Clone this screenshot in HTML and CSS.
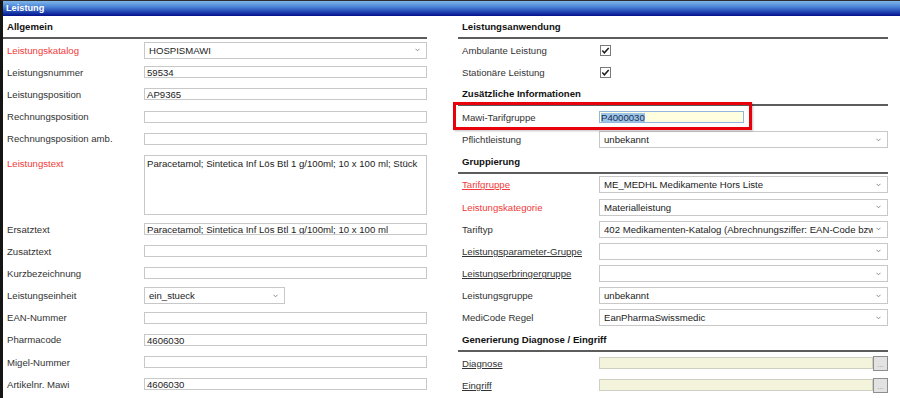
FILE: index.html
```html
<!DOCTYPE html>
<html lang="de">
<head>
<meta charset="utf-8">
<title>Leistung</title>
<link rel="stylesheet" href="styles.css">
</head>
<body>
<div class="window">
  <div class="titlebar">Leistung</div>
  <div class="content">
    <div class="col col-left">
      <div class="head">Allgemein</div>
      <div class="row"><span class="lbl req">Leistungskatalog</span><div class="field"><div class="sel"><span class="val">HOSPISMAWI</span><svg class="chev" width="5" height="4" viewBox="0 0 5 4"><path d="M0.5 0.8 L2.5 2.8 L4.5 0.8" fill="none" stroke="#8a8a8a" stroke-width="1"/></svg></div></div></div>
      <div class="row"><span class="lbl">Leistungsnummer</span><div class="field"><div class="txt">59534</div></div></div>
      <div class="row"><span class="lbl">Leistungsposition</span><div class="field"><div class="txt">AP9365</div></div></div>
      <div class="row"><span class="lbl">Rechnungsposition</span><div class="field"><div class="txt"></div></div></div>
      <div class="row"><span class="lbl">Rechnungsposition amb.</span><div class="field"><div class="txt"></div></div></div>
      <div class="row tall"><span class="lbl req">Leistungstext</span><div class="field"><div class="area">Paracetamol; Sintetica Inf Lös Btl 1 g/100ml; 10 x 100 ml; Stück</div></div></div>
      <div class="row"><span class="lbl">Ersatztext</span><div class="field"><div class="txt">Paracetamol; Sintetica Inf Lös Btl 1 g/100ml; 10 x 100 ml</div></div></div>
      <div class="row"><span class="lbl">Zusatztext</span><div class="field"><div class="txt"></div></div></div>
      <div class="row"><span class="lbl">Kurzbezeichnung</span><div class="field"><div class="txt"></div></div></div>
      <div class="row"><span class="lbl">Leistungseinheit</span><div class="field"><div class="sel short"><span class="val">ein_stueck</span><svg class="chev" width="5" height="4" viewBox="0 0 5 4"><path d="M0.5 0.8 L2.5 2.8 L4.5 0.8" fill="none" stroke="#8a8a8a" stroke-width="1"/></svg></div></div></div>
      <div class="row"><span class="lbl">EAN-Nummer</span><div class="field"><div class="txt"></div></div></div>
      <div class="row"><span class="lbl">Pharmacode</span><div class="field"><div class="txt">4606030</div></div></div>
      <div class="row"><span class="lbl">Migel-Nummer</span><div class="field"><div class="txt"></div></div></div>
      <div class="row"><span class="lbl">Artikelnr. Mawi</span><div class="field"><div class="txt">4606030</div></div></div>
    </div>
    <div class="col col-right">
      <div class="head">Leistungsanwendung</div>
      <div class="row"><span class="lbl">Ambulante Leistung</span><div class="field"><svg class="cb" width="11" height="11" viewBox="0 0 11 11"><rect x="0.5" y="0.5" width="10" height="10" fill="#fff" stroke="#7a7a7a"/><path d="M2.3 5.6 L4.4 7.8 L8.7 2.9" fill="none" stroke="#1e1e1e" stroke-width="1.5"/></svg></div></div>
      <div class="row"><span class="lbl">Stationäre Leistung</span><div class="field"><svg class="cb" width="11" height="11" viewBox="0 0 11 11"><rect x="0.5" y="0.5" width="10" height="10" fill="#fff" stroke="#7a7a7a"/><path d="M2.3 5.6 L4.4 7.8 L8.7 2.9" fill="none" stroke="#1e1e1e" stroke-width="1.5"/></svg></div></div>
      <div class="head">Zusätzliche Informationen</div>
      <div class="row"><span class="lbl">Mawi-Tarifgruppe</span><div class="field"><div class="txt focus"><span class="selected">P4000030</span></div></div></div>
      <div class="row"><span class="lbl">Pflichtleistung</span><div class="field"><div class="sel"><span class="val">unbekannt</span><svg class="chev" width="5" height="4" viewBox="0 0 5 4"><path d="M0.5 0.8 L2.5 2.8 L4.5 0.8" fill="none" stroke="#8a8a8a" stroke-width="1"/></svg></div></div></div>
      <div class="head">Gruppierung</div>
      <div class="row"><span class="lbl req link">Tarifgruppe</span><div class="field"><div class="sel"><span class="val">ME_MEDHL Medikamente Hors Liste</span><svg class="chev" width="5" height="4" viewBox="0 0 5 4"><path d="M0.5 0.8 L2.5 2.8 L4.5 0.8" fill="none" stroke="#8a8a8a" stroke-width="1"/></svg></div></div></div>
      <div class="row"><span class="lbl req">Leistungskategorie</span><div class="field"><div class="sel"><span class="val">Materialleistung</span><svg class="chev" width="5" height="4" viewBox="0 0 5 4"><path d="M0.5 0.8 L2.5 2.8 L4.5 0.8" fill="none" stroke="#8a8a8a" stroke-width="1"/></svg></div></div></div>
      <div class="row"><span class="lbl">Tariftyp</span><div class="field"><div class="sel"><span class="val">402 Medikamenten-Katalog (Abrechnungsziffer: EAN-Code bzw</span><svg class="chev" width="5" height="4" viewBox="0 0 5 4"><path d="M0.5 0.8 L2.5 2.8 L4.5 0.8" fill="none" stroke="#8a8a8a" stroke-width="1"/></svg></div></div></div>
      <div class="row"><span class="lbl link">Leistungsparameter-Gruppe</span><div class="field"><div class="sel"><span class="val"></span><svg class="chev" width="5" height="4" viewBox="0 0 5 4"><path d="M0.5 0.8 L2.5 2.8 L4.5 0.8" fill="none" stroke="#8a8a8a" stroke-width="1"/></svg></div></div></div>
      <div class="row"><span class="lbl link">Leistungserbringergruppe</span><div class="field"><div class="sel"><span class="val"></span><svg class="chev" width="5" height="4" viewBox="0 0 5 4"><path d="M0.5 0.8 L2.5 2.8 L4.5 0.8" fill="none" stroke="#8a8a8a" stroke-width="1"/></svg></div></div></div>
      <div class="row"><span class="lbl">Leistungsgruppe</span><div class="field"><div class="sel"><span class="val">unbekannt</span><svg class="chev" width="5" height="4" viewBox="0 0 5 4"><path d="M0.5 0.8 L2.5 2.8 L4.5 0.8" fill="none" stroke="#8a8a8a" stroke-width="1"/></svg></div></div></div>
      <div class="row"><span class="lbl">MediCode Regel</span><div class="field"><div class="sel"><span class="val">EanPharmaSwissmedic</span><svg class="chev" width="5" height="4" viewBox="0 0 5 4"><path d="M0.5 0.8 L2.5 2.8 L4.5 0.8" fill="none" stroke="#8a8a8a" stroke-width="1"/></svg></div></div></div>
      <div class="head">Generierung Diagnose / Eingriff</div>
      <div class="row"><span class="lbl link">Diagnose</span><div class="field"><div class="txt lookup"></div><button class="dots" type="button">...</button></div></div>
      <div class="row"><span class="lbl link">Eingriff</span><div class="field"><div class="txt lookup"></div><button class="dots" type="button">...</button></div></div>
    </div>
  </div>
  <div class="marker"></div>
</div>
</body>
</html>
```

FILE: styles.css
```css
* { box-sizing: border-box; }
html, body { margin: 0; padding: 0; background: #fff; }
body {
  font-family: "Liberation Sans", Arial, sans-serif;
  font-size: 9.6px;
  color: #333;
  overflow: hidden;
}
.window {
  position: relative;
  height: 398px;
  border-left: 3px solid #151515;
  border-top: 1px solid #2e2e2e;
}
.titlebar {
  height: 15px;
  line-height: 15px;
  padding-left: 3px;
  color: #fff;
  font-weight: bold;
  font-size: 9.2px;
  background: linear-gradient(#7fb7ea 0%, #4a83d6 40%, #1c3fae 75%, #04108a 100%);
}
.content {
  display: flex;
  gap: 31px;
}
.col-left { width: 424px; flex: none; }
.col-right { width: 430px; flex: none; }
.head {
  height: 23px;
  line-height: 22px;
  padding-left: 4px;
  font-weight: bold;
  color: #111;
  border-bottom: 2px solid #5c5c5c;
}
.row {
  display: flex;
  align-items: center;
  height: 22.2px;
}
.row.tall {
  height: 68px;
  align-items: flex-start;
}
.lbl {
  width: 141px;
  flex: none;
  padding-left: 4px;
  padding-top: 1px;
  white-space: nowrap;
  line-height: 12px;
}
.row.tall .lbl { margin-top: 7px; }
.req { color: #f23a3a; }
.link { text-decoration: underline; }
.field {
  flex: 1;
  min-width: 0;
  display: flex;
  align-items: center;
}
.txt {
  width: 100%;
  height: 12px;
  line-height: 11px;
  border: 1px solid #c8c8c8;
  padding: 0 2px;
  color: #222;
  white-space: nowrap;
  overflow: hidden;
  background: #fff;
}
.txt.focus {
  width: 145px;
  background: #ffffe0;
  border-color: #93b6dc;
  padding: 0 0 0 1px;
}
.selected {
  display: inline-block;
  background: #9cc5ea;
  color: #1d2f4f;
  line-height: 10px;
}
.txt.lookup {
  flex: 1;
  width: auto;
  background: #f4f4dc;
  border-color: #cfcfc2;
}
.dots {
  flex: none;
  width: 15px;
  height: 15px;
  margin: 0;
  padding: 0 0 2px;
  border: 1px solid #8e8e8e;
  background: #e2e2e2;
  color: #888;
  font: 7px "Liberation Sans", Arial, sans-serif;
  line-height: 7px;
  display: flex;
  align-items: flex-end;
  justify-content: center;
}
.area {
  margin-top: 5px;
  width: 100%;
  height: 60px;
  border: 1px solid #c8c8c8;
  padding: 2px 2px;
  line-height: 11px;
  color: #222;
}
.sel {
  width: 100%;
  height: 17px;
  border: 1px solid #c8c8c8;
  display: flex;
  align-items: center;
  padding: 0 6px 0 4px;
  color: #222;
  background: #fff;
}
.sel.short { width: 141px; }
.sel .val {
  flex: 1;
  min-width: 0;
  white-space: nowrap;
  overflow: hidden;
}
.chev { flex: none; margin-left: 3px; }
.cb { margin-left: 1px; display: block; }
.marker {
  position: absolute;
  left: 450px;
  top: 101px;
  width: 299px;
  height: 28px;
  border: 3px solid #e8000b;
  box-shadow: 1px 1px 2px rgba(0,0,0,0.25);
}
```
